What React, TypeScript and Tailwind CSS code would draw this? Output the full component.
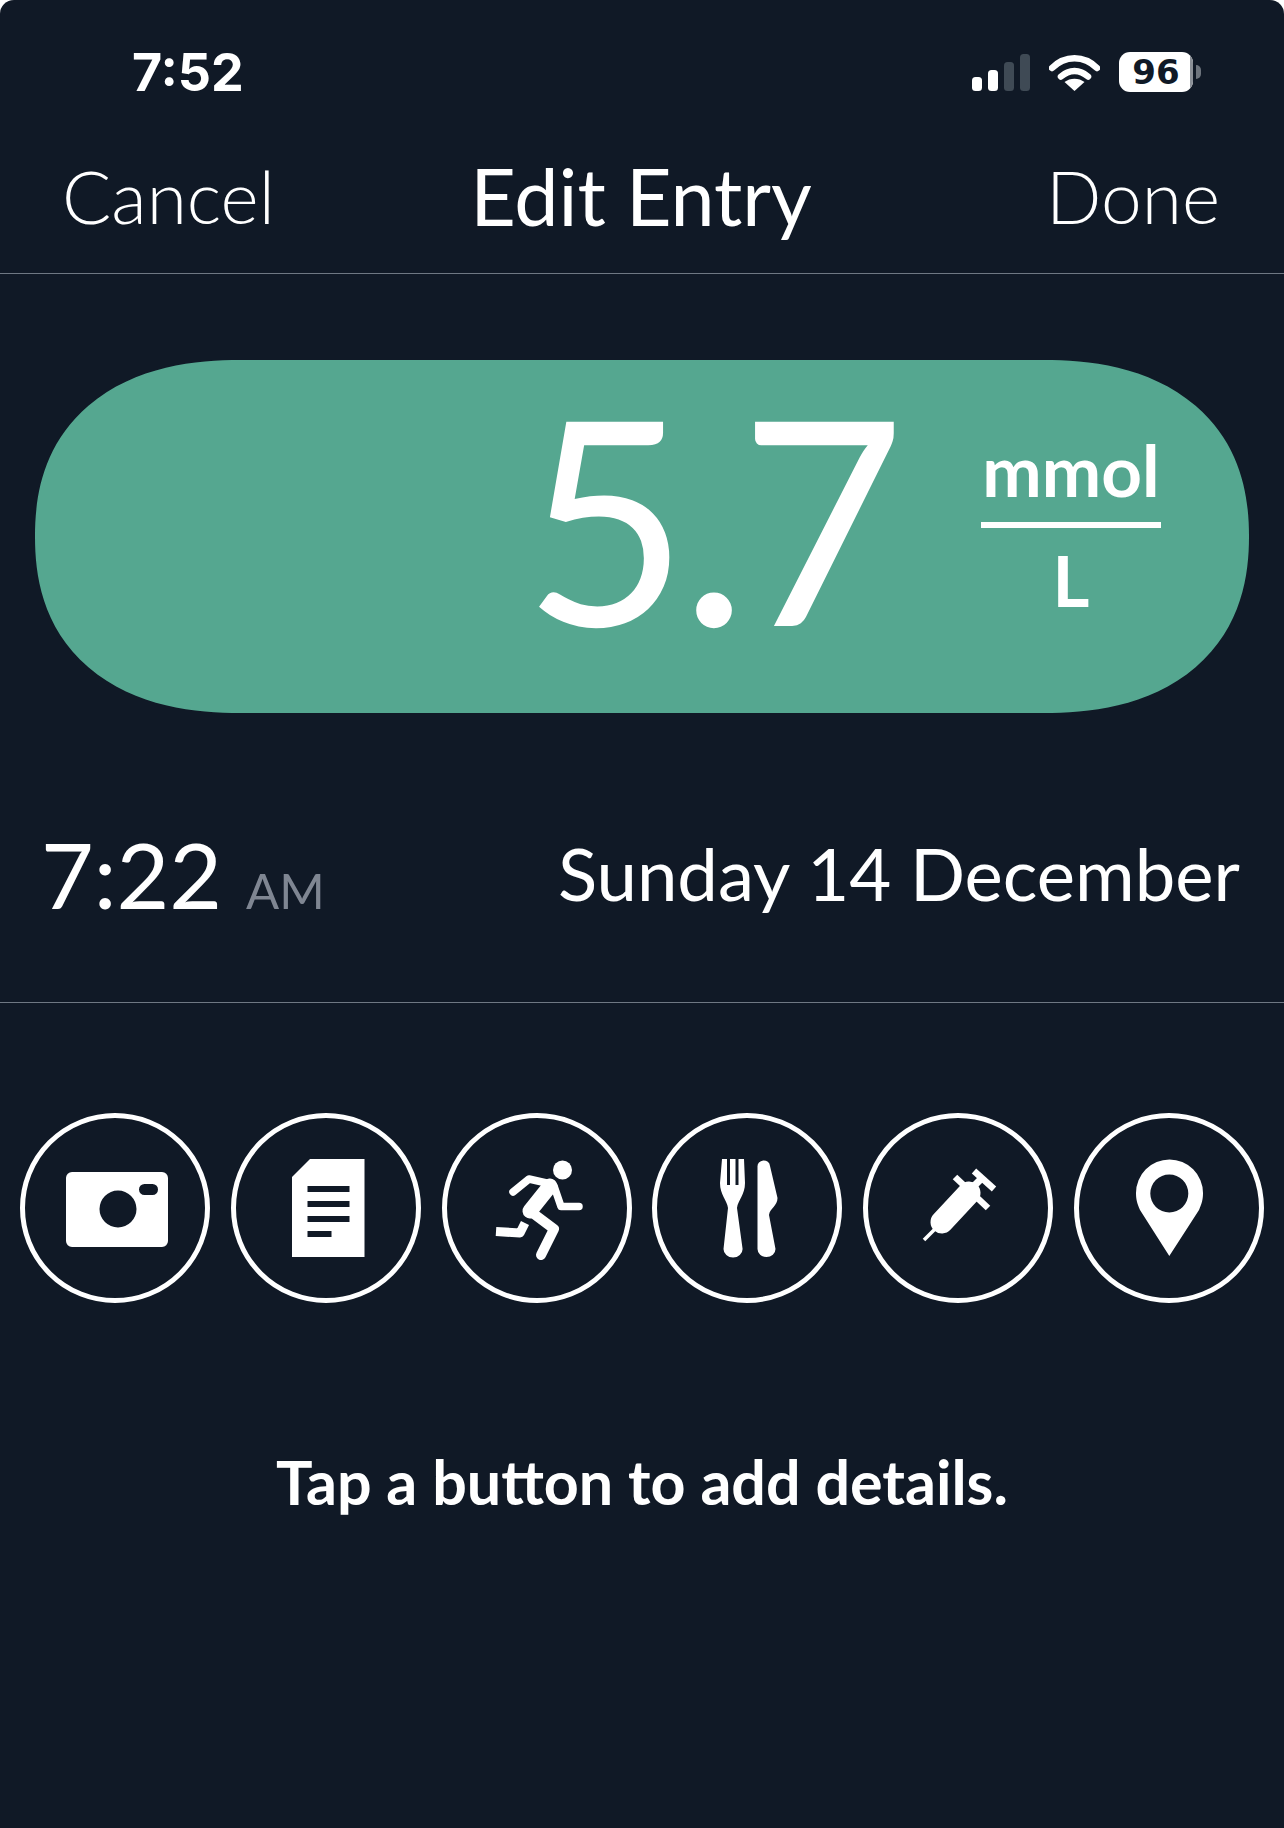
import React from "react";

const textFont = "font-['Lato','Noto_Sans',sans-serif]";

function Signal() {
  return (
    <svg width="58" height="37" viewBox="0 0 58 37">
      <rect x="0" y="23" width="10" height="14" rx="3.5" fill="#fff" />
      <rect x="16" y="16" width="10" height="21" rx="3.5" fill="#fff" />
      <rect x="32" y="8" width="10" height="29" rx="3.5" fill="#3f4a55" />
      <rect x="48" y="0" width="10" height="37" rx="3.5" fill="#3f4a55" />
    </svg>
  );
}

function Wifi() {
  return (
    <svg width="51" height="37" viewBox="0 0 51 37" fill="none">
      <path d="M3 14 C16 1 35 1 48 14" stroke="#fff" strokeWidth="6.5" strokeLinecap="round" />
      <path d="M12 22.5 C20 15 31 15 39 22.5" stroke="#fff" strokeWidth="6.5" strokeLinecap="round" />
      <path d="M25.5 37 L15.5 28 C21 23.5 30 23.5 35.5 28 Z" fill="#fff" />
    </svg>
  );
}

function Battery() {
  return (
    <div className="flex items-center gap-[3px]">
      <div className="relative flex h-[40px] w-[74px] items-center justify-center overflow-hidden rounded-[11px] bg-white">
        <span className="font-['DejaVu_Sans',sans-serif] text-[34px] leading-none font-bold text-[#101926]">96</span>
        <div className="absolute top-0 right-0 bottom-0 w-[3px] bg-[#8b9097]" />
      </div>
      <div className="h-[14px] w-[5px] rounded-r-full bg-[#6d747d]" />
    </div>
  );
}

function Round({ children }: { children: React.ReactNode }) {
  return (
    <button className="flex h-[190px] w-[190px] shrink-0 items-center justify-center rounded-full border-[5px] border-white">
      <svg width="190" height="190" viewBox="0 0 190 190" className="shrink-0">
        {children}
      </svg>
    </button>
  );
}

const BG = "#101926";

export default function App() {
  return (
    <div className={`${textFont} flex h-[1828px] w-[1284px] flex-col overflow-hidden rounded-t-[14px] bg-[#101926] text-white`}>
      {/* status bar */}
      <div className="flex h-[144px] items-start justify-between pt-[47px] pr-[83px] pl-[132px]">
        <span className="font-['Inter',sans-serif] text-[52px] leading-[52px] font-bold">7:52</span>
        <div className="flex items-center gap-[19px] pt-[5px]">
          <Signal />
          <Wifi />
          <Battery />
        </div>
      </div>

      {/* nav */}
      <div className="grid h-[130px] grid-cols-[1fr_auto_1fr] items-start border-b-[1px] border-[#6f7883] pt-[10px] pr-[64px] pl-[62px]">
        <span className="text-[73px] leading-[84px] font-light">Cancel</span>
        <span className="text-[79px] leading-[84px] font-normal">Edit Entry</span>
        <span className="justify-self-end text-[73px] leading-[84px] font-light">Done</span>
      </div>

      {/* reading */}
      <div className="mx-[35px] mt-[86px] flex h-[353px] items-center justify-end rounded-[205px/176px] bg-[#55a790] pr-[88px] [corner-shape:superellipse(1.2)]">
        <span className="mr-[84px] pb-[40px] text-[285px] leading-none font-normal tracking-[-8px]">5.7</span>
        <div className="flex w-[180px] flex-col items-center pb-[24px]">
          <span className="text-[71px] leading-[80px] font-bold">mmol</span>
          <div className="my-[12px] h-[6px] w-full bg-white" />
          <span className="text-[71px] leading-[80px] font-bold">L</span>
        </div>
      </div>

      {/* time and date */}
      <div className="flex h-[290px] items-center justify-between border-b-[1px] border-[#6f7883] pt-[32px] pr-[44px] pl-[41px]">
        <div className="flex items-baseline gap-[24px]">
          <span className="text-[91px] leading-none font-normal">7:22</span>
          <span className="text-[49px] leading-none font-normal text-[#7f8692]">AM</span>
        </div>
        <span className="text-[72.5px] leading-none font-normal">Sunday 14 December</span>
      </div>

      {/* detail buttons */}
      <div className="mt-[110px] flex justify-between px-[20px]">
        <Round>
          <path fillRule="evenodd" fill="#fff" d="M52 59 H142 A6 6 0 0 1 148 65 V128 A6 6 0 0 1 142 134 H52 A6 6 0 0 1 46 128 V65 A6 6 0 0 1 52 59 Z M98 77.5 A18.5 18.5 0 1 0 98 114.5 A18.5 18.5 0 1 0 98 77.5 Z M124.5 71 A5.5 5.5 0 0 0 124.5 82 H132.5 A5.5 5.5 0 0 0 132.5 71 Z" />
        </Round>
        <Round>
          <path fill="#fff" d="M79 46 H133.5 V144 H61 V64 Z" />
          <rect x="76.5" y="73" width="42" height="6" fill={BG} />
          <rect x="76.5" y="88" width="42" height="6" fill={BG} />
          <rect x="76.5" y="103" width="42" height="6" fill={BG} />
          <rect x="76.5" y="118" width="24" height="6" fill={BG} />
        </Round>
        <Round>
          <circle cx="120.5" cy="57" r="9.5" fill="#fff" />
          <g fill="none" stroke="#fff" strokeLinecap="round" strokeLinejoin="round">
            <path d="M71 79 L87 66 L109 71" strokeWidth="7.5" />
            <path d="M108 73 L88 98" strokeWidth="15" />
            <path d="M112 73 L119 93.5 L137 93.5" strokeWidth="7.5" />
            <path d="M88 98 L112 116 L99 142" strokeWidth="10" />
            <path d="M83 110 L78 120 L54 118.5" strokeWidth="9" strokeLinecap="butt" />
          </g>
        </Round>
        <Round>
          <path fill="#fff" d="M70 46 H75 V72 H78 V46 H83.5 V72 H86.5 V46 H92 L93 70 C93 82 86 87 85 95 L90.6 136 A9.5 8.5 0 0 1 71.5 136 L76 95 C75 87 68 82 68 70 Z" />
          <path fill="#fff" d="M105.5 54 A6.2 6 0 0 1 118 53 L125.5 85 C125.5 93 118 95 117 102 L123.5 136 A9 8 0 0 1 105.5 136 Z" />
        </Round>
        <Round>
          <g fill="none" stroke="#fff">
            <path d="M61 127 L76 112" strokeWidth="3.5" />
            <path d="M79 109 L106 80" strokeWidth="23" strokeLinecap="round" />
            <path d="M92 64 L125 95" strokeWidth="6.5" />
            <path d="M108 76 L118 66" strokeWidth="7" />
            <path d="M111 58 L131 76" strokeWidth="6.5" />
          </g>
        </Round>
        <Round>
          <path fillRule="evenodd" fill="#fff" d="M95.3 143 L66 97 C63 90 62 86 62 80 A33.5 33.5 0 0 1 129 80 C129 86 128 90 125 97 Z M95.3 61.5 A19 19 0 1 0 95.3 99.5 A19 19 0 1 0 95.3 61.5 Z" />
        </Round>
      </div>

      <p className="mt-[144px] text-center text-[61px] leading-[70px] font-bold">Tap a button to add details.</p>
    </div>
  );
}
